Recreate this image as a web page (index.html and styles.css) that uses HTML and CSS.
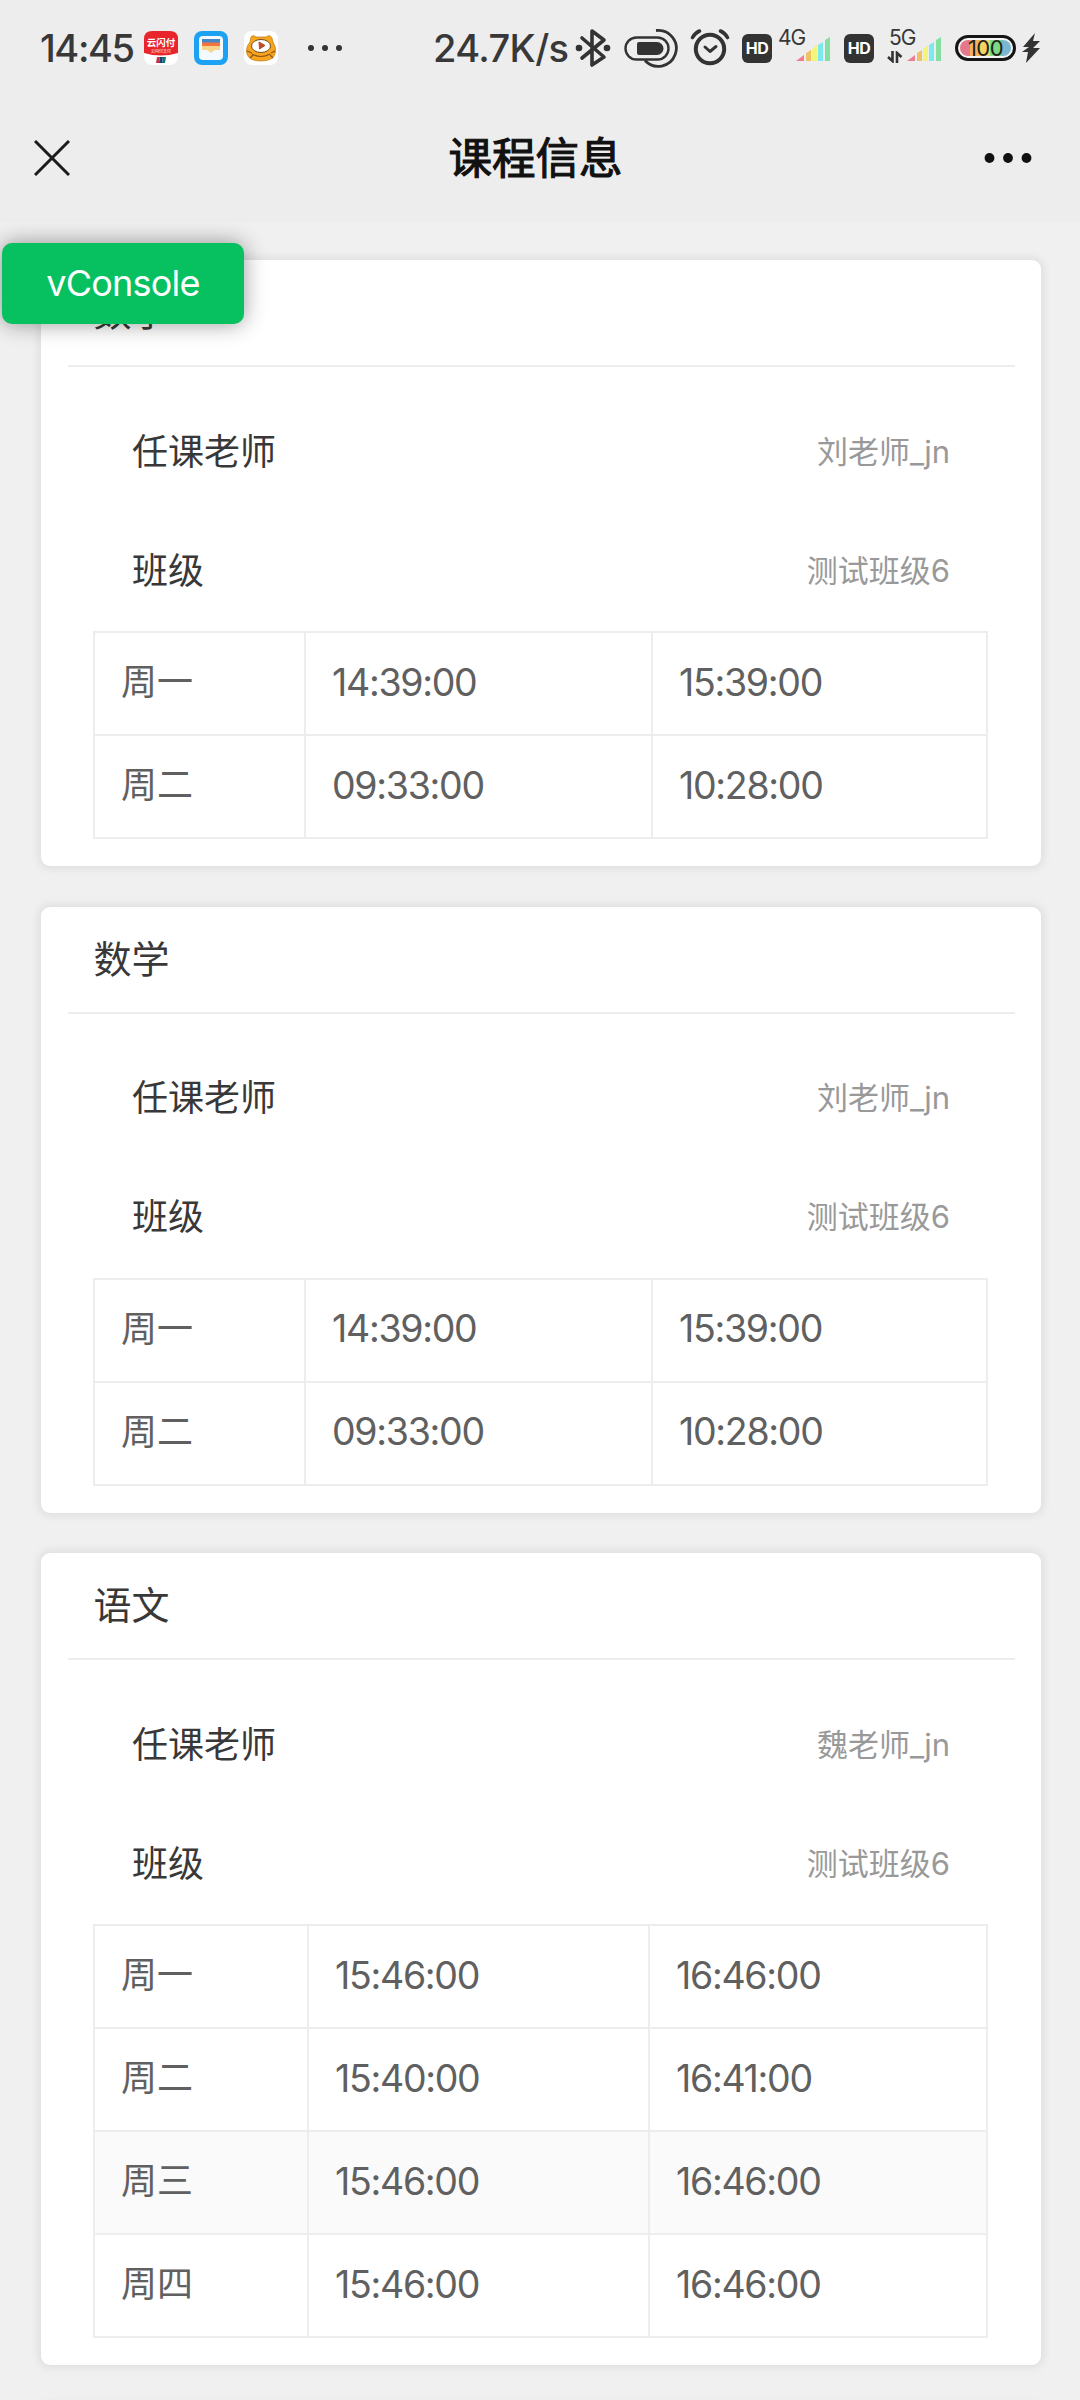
FILE: index.html
```
<!DOCTYPE html>
<html lang="zh-CN">
<head>
    <meta charset="UTF-8">
    <meta name="viewport" content="width=device-width, initial-scale=1.0">
    <title>课程信息</title>
    <link rel="stylesheet" href="styles.css">
</head>
<body>
    <div class="status-bar">
        <span class="clock">14:45</span>
        <div class="app-icons">
            <svg width="34" height="34" viewBox="0 0 34 34">
                <rect width="34" height="34" rx="8" fill="#fff"/>
                <path d="M0 22V8Q0 0 8 0H26Q34 0 34 8V22Q17 27 0 22Z" fill="#e8252a"/>
                <text x="17" y="15" class="pay-name">云闪付</text>
                <text x="17" y="21.500" class="pay-sub">云闪付支付</text>
                <path d="M13 26H16L15 32H12Z" fill="#c8324a"/>
                <path d="M16 26H19L18 32H15Z" fill="#1c3f72"/>
                <path d="M19 26H22L21 32H18Z" fill="#147277"/>
            </svg>
            <svg width="34" height="34" viewBox="0 0 34 34">
                <rect width="34" height="34" rx="8" fill="#1da1f2"/>
                <rect x="5" y="5" width="24" height="24" rx="4" fill="#f3faff"/>
                <path d="M8 8H26V13H8Z" fill="#4488c7"/>
                <path d="M8 11.500H26V16H8Z" fill="#f5743e"/>
                <path d="M8 15H26V19H21L17 22L13 19H8Z" fill="#f7d58c"/>
            </svg>
            <svg width="34" height="34" viewBox="0 0 34 34">
                <rect width="34" height="34" rx="8" fill="#fff"/>
                <path d="M7 6Q9 3 12 6H22Q26 3 28 7L29 11Q33 17 31 23Q29 30 17 30Q5 30 3 23Q1 17 6 11Z" fill="#f6a51c" stroke="#bd7617" stroke-width=".7"/>
                <ellipse cx="17" cy="15" rx="9.500" ry="6.500" fill="#fff" stroke="#6b4c22" stroke-width="1"/>
                <path d="M15 11L21 14.500L15.500 18Z" fill="#b94c2a" stroke="#b94c2a" stroke-linejoin="round"/>
                <path d="M8 23Q17 28 26 23M3 20L8 22M31 20L27 22M6 27L9 24M29 27L26 24" fill="none" stroke="#8f5418" stroke-width="1.200"/>
            </svg>
        </div>
        <svg class="more-apps" width="36" height="8" viewBox="0 0 36 8" fill="#333">
            <circle cx="4" cy="4" r="3"/>
            <circle cx="18" cy="4" r="3"/>
            <circle cx="32" cy="4" r="3"/>
        </svg>

        <span class="net-speed">24.7K/s</span>
        <svg class="bluetooth" width="36" height="40" viewBox="0 0 36 40">
            <path d="M7 10L29 29L17 37V3L29 12L7 30" fill="none" stroke="#333" stroke-width="3.600" stroke-linejoin="round" stroke-linecap="round"/>
            <circle cx="4" cy="20" r="3.300" fill="#333"/>
            <circle cx="32" cy="20" r="3.300" fill="#333"/>
        </svg>
        <svg class="toggle" width="54" height="40" viewBox="0 0 54 40">
            <rect x="1.500" y="9.500" width="43" height="22" rx="11" fill="none" stroke="#333" stroke-width="2.400"/>
            <path d="M15 14H33A6 6 0 0 1 33 27H15Q13 27 13 25V16Q13 14 15 14Z" fill="#333"/>
            <path d="M32 2.500A18 18 0 1 1 21 32.500" fill="none" stroke="#333" stroke-width="2.800"/>
        </svg>
        <svg class="alarm" width="40" height="40" viewBox="0 0 40 40" fill="none" stroke="#333" stroke-linecap="round">
            <circle cx="20" cy="21" r="14.200" stroke-width="4"/>
            <path d="M15 19L20 23.500L26 18.500" stroke-width="3" stroke-linejoin="round"/>
            <path d="M2.500 9.500Q5 5 9.500 3M30.500 3Q35 5 37.500 9.500" stroke-width="3.600"/>
        </svg>
        <span class="hd">HD</span>
        <div class="network">
            <span class="net-type">4G</span>
            <svg class="signal" width="34" height="24" viewBox="0 0 34 24">
                <path d="M0 24L8 18V24Z" fill="#ee7d92"/>
                <path d="M10 16L15 13V24H10Z" fill="#efc165"/>
                <path d="M16 12L21 8V24H16Z" fill="#f4f47c"/>
                <path d="M22 8L27 5V24H22Z" fill="#7ce9ef"/>
                <path d="M29 3L34 0V24H29Z" fill="#83e0a0"/>
            </svg>
        </div>
        <span class="hd">HD</span>
        <div class="network network-5g">
            <span class="net-type">5G</span>
            <svg class="arrows" width="16" height="12" viewBox="0 0 16 12" fill="none" stroke="#333" stroke-width="2.600">
                <path d="M5.500 0V10L1 6M10 12V2L14.500 6"/>
            </svg>
            <svg class="signal" width="34" height="24" viewBox="0 0 34 24">
                <path d="M0 24L8 18V24Z" fill="#ee7d92"/>
                <path d="M10 16L15 13V24H10Z" fill="#efc165"/>
                <path d="M16 12L21 8V24H16Z" fill="#f4f47c"/>
                <path d="M22 8L27 5V24H22Z" fill="#7ce9ef"/>
                <path d="M29 3L34 0V24H29Z" fill="#83e0a0"/>
            </svg>
        </div>
        <div class="battery"><span class="battery-level">100</span></div>
        <svg class="bolt" width="18" height="30" viewBox="0 0 18 30">
            <path d="M13 0L1 14H7L0 19H6L4 30L18 15H11L18 8H11Z" fill="#333"/>
        </svg>
    </div>

    <div class="nav-bar">
        <svg class="close" width="36" height="36" viewBox="0 0 36 36">
            <path d="M1 1L35 35M35 1L1 35" stroke="#1c1c1c" stroke-width="3"/>
        </svg>
        <h1>课程信息</h1>
        <svg class="menu" width="48" height="12" viewBox="0 0 48 12" fill="#111">
            <circle cx="5.500" cy="6" r="4.900"/>
            <circle cx="24" cy="6" r="4.900"/>
            <circle cx="42.500" cy="6" r="4.900"/>
        </svg>
    </div>

    <div class="vconsole">vConsole</div>

    <div class="container">
        <div class="card">
            <h2>数学</h2>
            <div class="info">
                <div class="row"><span>任课老师</span><span class="value">刘老师_jn</span></div>
                <div class="row"><span>班级</span><span class="value">测试班级6</span></div>
            </div>
            <table>
                <tr><td class="day">周一</td><td class="start">14:39:00</td><td>15:39:00</td></tr>
                <tr><td class="day">周二</td><td class="start">09:33:00</td><td>10:28:00</td></tr>
            </table>
        </div>

        <div class="card">
            <h2>数学</h2>
            <div class="info">
                <div class="row"><span>任课老师</span><span class="value">刘老师_jn</span></div>
                <div class="row"><span>班级</span><span class="value">测试班级6</span></div>
            </div>
            <table>
                <tr><td class="day">周一</td><td class="start">14:39:00</td><td>15:39:00</td></tr>
                <tr><td class="day">周二</td><td class="start">09:33:00</td><td>10:28:00</td></tr>
            </table>
        </div>

        <div class="card">
            <h2>语文</h2>
            <div class="info">
                <div class="row"><span>任课老师</span><span class="value">魏老师_jn</span></div>
                <div class="row"><span>班级</span><span class="value">测试班级6</span></div>
            </div>
            <table class="wide-end">
                <tr><td class="day">周一</td><td class="start">15:46:00</td><td>16:46:00</td></tr>
                <tr><td class="day">周二</td><td class="start">15:40:00</td><td>16:41:00</td></tr>
                <tr class="active"><td class="day">周三</td><td class="start">15:46:00</td><td>16:46:00</td></tr>
                <tr><td class="day">周四</td><td class="start">15:46:00</td><td>16:46:00</td></tr>
            </table>
        </div>

        <div class="card"></div>
    </div>
</body>
</html>
```
FILE: styles.css
```
* {
    box-sizing: border-box;
}
body {
    margin: 0;
    height: 2400px;
    overflow: hidden;
    background: #f0f0f0;
    color: #383838;
    font-family: Inter, "Noto Sans CJK SC", sans-serif;
}
svg {
    display: block;
    flex: none;
}

/* status bar */
.status-bar {
    display: flex;
    align-items: center;
    height: 96px;
    padding-left: 40px;
    background: #ededed;
    white-space: nowrap;
}
.clock {
    width: 104px;
    font-size: 38px;
    font-weight: 500;
    letter-spacing: -1.4px;
}
.app-icons {
    display: flex;
    gap: 16px;
}
.pay-name {
    font-size: 9.5px;
    font-weight: bold;
    text-anchor: middle;
    fill: #fff;
}
.pay-sub {
    font-size: 4px;
    text-anchor: middle;
    fill: #fff;
}
.more-apps {
    margin-left: 29px;
}
.net-speed {
    width: 142px;
    margin-left: 90px;
    font-size: 38px;
    font-weight: 500;
    letter-spacing: -.6px;
}
.toggle {
    margin-left: 13px;
}
.alarm {
    margin-left: 12px;
}
.hd {
    width: 30px;
    height: 29px;
    margin-left: 12px;
    border-radius: 6px;
    background: #333;
    color: #fff;
    font-size: 16px;
    font-weight: 700;
    line-height: 29px;
    letter-spacing: -.4px;
    text-align: center;
}
.network {
    position: relative;
    width: 60px;
    height: 36px;
}
.net-type {
    position: absolute;
    left: 6px;
    top: -2px;
    font-size: 21px;
    line-height: 20px;
    letter-spacing: -1px;
}
.signal {
    position: absolute;
    right: 2px;
    bottom: 5px;
}
.network-5g {
    width: 69px;
}
.network-5g .net-type {
    left: 15px;
}
.arrows {
    position: absolute;
    left: 13px;
    bottom: 3px;
}
.battery {
    width: 61px;
    height: 26px;
    margin-left: 12px;
    border: 3px solid #151515;
    border-radius: 13px;
    padding: 2px;
    background: #f4f4f4;
}
.battery-level {
    display: block;
    height: 16px;
    border-radius: 8px;
    background: linear-gradient(90deg, #e5788b 0 20%, #f3b462 20% 40%, #f6d45f 40% 58%, #79dc83 58% 80%, #7bb7cf 80%);
    color: #222;
    font-size: 22px;
    line-height: 16px;
    letter-spacing: -.5px;
    text-align: center;
}
.bolt {
    margin-left: 6px;
}

/* page title */
.nav-bar {
    display: flex;
    align-items: center;
    justify-content: space-between;
    height: 126px;
    padding: 0 48px 0 34px;
    background: #ededed;
}
.nav-bar svg {
    margin-bottom: 2px;
}
h1 {
    margin: 0 0 8px 17px;
    color: #111;
    font-size: 43.5px;
    font-weight: 400;
    -webkit-text-stroke: 1.1px #111;
}

/* floating debug button */
.vconsole {
    position: absolute;
    left: 2px;
    top: 243px;
    width: 242px;
    height: 81px;
    border-radius: 10px;
    background: #07c160;
    box-shadow: 0 0 22px rgba(0, 0, 0, .4);
    color: #fff;
    font-size: 36px;
    line-height: 81px;
    letter-spacing: -.8px;
    text-align: center;
}

.container {
    height: 2178px;
    padding: 38px 39.5px 0 40.5px;
    overflow: hidden;
}
.card {
    min-height: 100px;
    margin-bottom: 40.5px;
    padding-bottom: 27px;
    border-radius: 9px;
    background: #fff;
    box-shadow: 0 0 8px 3px rgba(0, 0, 0, .07);
}
h2 {
    height: 107px;
    margin: 0 26px 0 27px;
    padding-left: 26px;
    border-bottom: 2px solid #ededed;
    font-size: 38px;
    font-weight: 400;
    line-height: 105px;
}
.info {
    padding: 22px 90.5px 4px 91.5px;
}
.row {
    display: flex;
    align-items: center;
    justify-content: space-between;
    height: 119px;
    font-size: 36px;
}
.value {
    padding-top: 1px;
    color: #999;
    font-size: 31px;
}
table {
    width: 895px;
    margin-left: 52.5px;
    border: solid #ededed;
    border-width: 2px 0 0 2px;
    border-spacing: 0;
    table-layout: fixed;
}
td {
    height: 103px;
    padding: 0 0 3px 26px;
    border: solid #ededed;
    border-width: 0 2px 2px 0;
    color: #606060;
    font-size: 37.5px;
    letter-spacing: -1.3px;
}
.day {
    width: 211px;
    padding-bottom: 9px;
    font-size: 36px;
    letter-spacing: 0;
}
.start {
    width: 347px;
}
.wide-end .day {
    width: 214px;
}
.wide-end .start {
    width: 341px;
}
.active {
    background: #fafafa;
}
```
